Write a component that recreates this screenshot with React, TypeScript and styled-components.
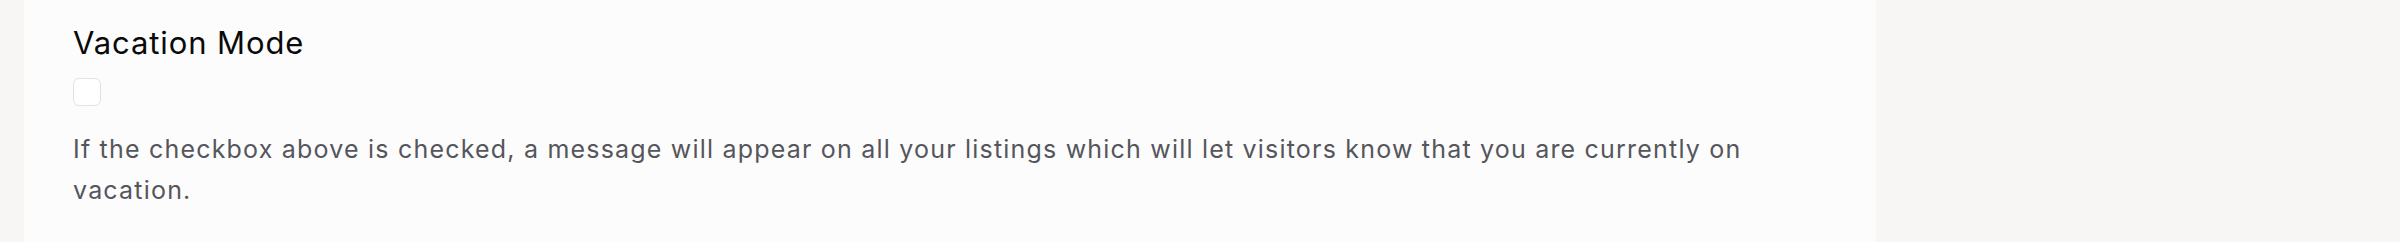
import styled, { createGlobalStyle } from 'styled-components'

const GlobalStyle = createGlobalStyle`
  html, body {
    margin: 0;
    padding: 0;
    background: #f7f6f4;
    font-family: Inter, "Noto Sans", "Liberation Sans", sans-serif;
  }
`

const Page = styled.div`
  display: flex;
  height: 242px;
  padding-left: 24px;
  overflow: hidden;
`

const Panel = styled.section`
  width: 1852px;
  background: #fcfcfc;
  padding: 25px 49px 0;
  box-sizing: border-box;
  display: flex;
  flex-direction: column;
`

const Title = styled.h2`
  margin: 0;
  font-size: 31px;
  line-height: 36px;
  font-weight: 400;
  letter-spacing: 0.9px;
  color: #0a0a0a;
`

const Checkbox = styled.input.attrs({ type: 'checkbox' })`
  appearance: none;
  margin: 17px 0 0;
  width: 28px;
  height: 28px;
  border: 1.5px solid #dfe2e7;
  border-radius: 6px;
  background: #ffffff;
  box-sizing: border-box;
`

const Help = styled.p`
  margin: 23px 0 0;
  font-size: 25px;
  line-height: 41px;
  letter-spacing: 1.2px;
  color: #55565c;
`

export default function App() {
  return (
    <>
      <GlobalStyle />
      <Page>
        <Panel>
          <Title>Vacation Mode</Title>
          <Checkbox aria-label="Vacation mode" />
          <Help>
            If the checkbox above is checked, a message will appear on all your listings which will let
            visitors know that you are currently on vacation.
          </Help>
        </Panel>
      </Page>
    </>
  )
}
